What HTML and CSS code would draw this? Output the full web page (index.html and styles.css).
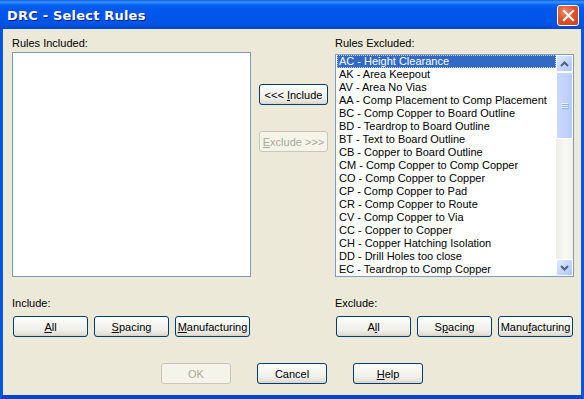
FILE: index.html
```html
<!DOCTYPE html>
<html lang="en">
<head>
    <meta charset="UTF-8">
    <title>DRC - Select Rules</title>
    <link rel="stylesheet" href="styles.css">
</head>
<body>
    <div class="window">
        <div class="titlebar">
            <span class="title">DRC - Select Rules</span>
            <span class="close-btn">
                <svg width="13" height="13" viewBox="0 0 13 13"><path d="M2 2 L11 11 M11 2 L2 11" stroke="#fff" stroke-width="2.2" stroke-linecap="square"/></svg>
            </span>
        </div>

        <div class="client">
            <div class="lists">
                <div class="panel">
                    <div class="label">Rules Included:</div>
                    <div class="listbox included"></div>
                </div>

                <div class="middle">
                    <button class="btn mid">&lt;&lt;&lt; <u>I</u>nclude</button>
                    <button class="btn mid" disabled><u>E</u>xclude &gt;&gt;&gt;</button>
                </div>

                <div class="panel">
                    <div class="label">Rules Excluded:</div>
                    <div class="listbox excluded">
                        <div class="rows">
                            <div class="row selected"><span>AC - Height Clearance</span></div>
                            <div class="row">AK - Area Keepout</div>
                            <div class="row">AV - Area No Vias</div>
                            <div class="row">AA - Comp Placement to Comp Placement</div>
                            <div class="row">BC - Comp Copper to Board Outline</div>
                            <div class="row">BD - Teardrop to Board Outline</div>
                            <div class="row">BT - Text to Board Outline</div>
                            <div class="row">CB - Copper to Board Outline</div>
                            <div class="row">CM - Comp Copper to Comp Copper</div>
                            <div class="row">CO - Comp Copper to Copper</div>
                            <div class="row">CP - Comp Copper to Pad</div>
                            <div class="row">CR - Comp Copper to Route</div>
                            <div class="row">CV - Comp Copper to Via</div>
                            <div class="row">CC - Copper to Copper</div>
                            <div class="row">CH - Copper Hatching Isolation</div>
                            <div class="row">DD - Drill Holes too close</div>
                            <div class="row">EC - Teardrop to Comp Copper</div>
                        </div>
                        <div class="scrollbar">
                            <div class="sb-btn">
                                <svg width="9" height="6" viewBox="0 0 9 6"><path d="M1 5 L4.5 1.5 L8 5" fill="none" stroke="#4d6185" stroke-width="2"/></svg>
                            </div>
                            <div class="sb-track">
                                <div class="sb-thumb">
                                    <svg width="8" height="8" viewBox="0 0 8 8"><path d="M0 1.5 H7 M0 3.5 H7 M0 5.5 H7" stroke="#eef4fe" stroke-width="1"/><path d="M1 2.5 H8 M1 4.5 H8 M1 6.5 H8" stroke="#8cb0f8" stroke-width="1"/></svg>
                                </div>
                            </div>
                            <div class="sb-btn">
                                <svg width="9" height="6" viewBox="0 0 9 6"><path d="M1 1 L4.5 4.5 L8 1" fill="none" stroke="#4d6185" stroke-width="2"/></svg>
                            </div>
                        </div>
                    </div>
                </div>
            </div>

            <div class="groups">
                <div class="group">
                    <div class="label">Include:</div>
                    <div class="group-buttons">
                        <button class="btn"><u>A</u>ll</button>
                        <button class="btn"><u>S</u>pacing</button>
                        <button class="btn"><u>M</u>anufacturing</button>
                    </div>
                </div>
                <div class="group">
                    <div class="label">Exclude:</div>
                    <div class="group-buttons">
                        <button class="btn">A<u>l</u>l</button>
                        <button class="btn">S<u>p</u>acing</button>
                        <button class="btn">Manu<u>f</u>acturing</button>
                    </div>
                </div>
            </div>

            <div class="actions">
                <button class="btn action" disabled>OK</button>
                <button class="btn action">Cancel</button>
                <button class="btn action"><u>H</u>elp</button>
            </div>
        </div>
    </div>
</body>
</html>
```

FILE: styles.css
```css
body {
    margin: 0;
    background: #ece9d8;
}
.window {
    width: 584px;
    height: 399px;
    font-family: "Liberation Sans", Arial, sans-serif;
    font-size: 11px;
    color: #000;
    display: flex;
    flex-direction: column;
}
.titlebar {
    height: 29px;
    box-sizing: border-box;
    display: flex;
    align-items: center;
    justify-content: space-between;
    padding: 1px 5px 0 7px;
    background: linear-gradient(180deg, #0a5ee6 0%, #3d93ff 7%, #0a66f6 16%, #0058ee 30%, #0055e8 70%, #0053e2 88%, #0046c8 100%);
}
.title {
    color: #fff;
    font-family: "DejaVu Sans", "Liberation Sans", sans-serif;
    font-weight: bold;
    font-size: 13px;
    letter-spacing: 0.2px;
    text-shadow: 1px 1px 0 #0a1e8c;
}
.close-btn {
    width: 20px;
    height: 19px;
    border: 1px solid #fff;
    border-radius: 3px;
    background: radial-gradient(circle at 35% 30%, #f08a6a 0%, #e0532c 45%, #c8401a 100%);
    display: flex;
    align-items: center;
    justify-content: center;
}
.client {
    flex: 1;
    box-sizing: border-box;
    background: #ece9d8;
    border-left: 3px solid #0055e5;
    border-right: 3px solid #0055e5;
    border-bottom: 4px solid #0047cc;
    padding: 8px 7px 0 9px;
    display: flex;
    flex-direction: column;
}
.label {
    line-height: 13px;
    height: 13px;
}
.lists {
    display: flex;
    gap: 8px;
}
.lists .middle + .panel {
    margin-left: -1px;
}
.panel {
    width: 239px;
    display: flex;
    flex-direction: column;
}
.listbox {
    box-sizing: border-box;
    background: #fff;
    border: 1px solid #7f9db9;
}
.included {
    margin-top: 2px;
    height: 225px;
}
.excluded {
    margin-top: 4px;
    height: 223px;
    display: flex;
    padding: 0 0 0 1px;
}
.rows {
    flex: 1;
}
.row {
    height: 13px;
    line-height: 13px;
    padding-left: 2px;
    white-space: nowrap;
}
.row.selected {
    background: #316ac5;
    color: #fff;
    outline: 1px dotted #c8d4ee;
    outline-offset: -1px;
}
.scrollbar {
    width: 17px;
    display: flex;
    flex-direction: column;
}
.sb-btn {
    height: 17px;
    box-sizing: border-box;
    border: 1px solid #fff;
    border-radius: 2px;
    background: linear-gradient(135deg, #e2ebfe 0%, #c5d6fc 50%, #b4c8f6 100%);
    display: flex;
    align-items: center;
    justify-content: center;
}
.sb-track {
    flex: 1;
    background: linear-gradient(90deg, #eeede5 0%, #f8f8f4 50%, #f3f1ec 100%);
    padding-top: 0;
}
.sb-thumb {
    height: 67px;
    box-sizing: border-box;
    border: 1px solid #fff;
    border-radius: 2px;
    background: linear-gradient(90deg, #c9d8fc 0%, #c1d3fb 60%, #b6cbf8 100%);
    display: flex;
    align-items: center;
    justify-content: center;
}
.middle {
    width: 69px;
    display: flex;
    flex-direction: column;
    gap: 26px;
    padding-top: 47px;
}
.btn {
    box-sizing: border-box;
    height: 21px;
    padding: 0;
    font-family: "Liberation Sans", Arial, sans-serif;
    font-size: 11px;
    color: #000;
    border: 1px solid #003c74;
    border-radius: 3px;
    background: linear-gradient(180deg, #ffffff 0%, #f7f7f3 30%, #efeee8 70%, #e3e0d6 90%, #d6d0c5 100%);
    white-space: nowrap;
}
.btn:disabled {
    color: #aca899;
    border-color: #c9c7ba;
    background: #f5f4ea;
}
.btn.mid {
    width: 69px;
}
.groups {
    display: flex;
    justify-content: space-between;
    margin-top: 20px;
}
.group {
    width: 239px;
}
.group-buttons {
    display: flex;
    gap: 6px;
    margin-top: 6px;
    padding-left: 1px;
}
.group-buttons .btn {
    width: 75px;
}
.actions {
    display: flex;
    justify-content: center;
    gap: 26px;
    margin-top: 26px;
    padding-right: 2px;
}
.btn.action {
    width: 70px;
}
```
